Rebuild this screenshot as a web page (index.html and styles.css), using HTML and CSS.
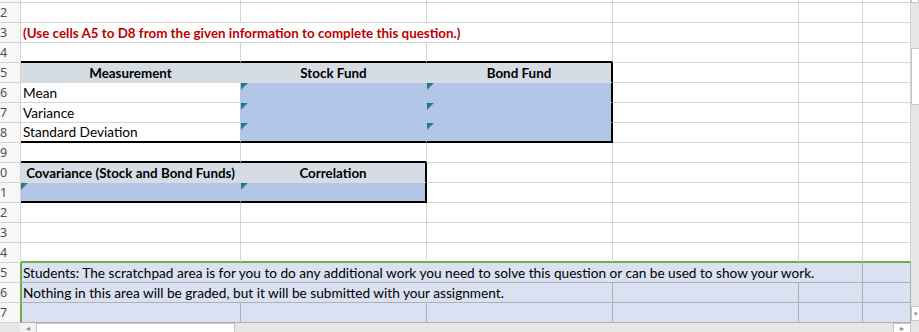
FILE: index.html
```html
<!DOCTYPE html>
<html lang="en">
<head>
<meta charset="utf-8">
<title>Worksheet</title>
<link rel="stylesheet" href="styles.css">
</head>
<body>
<div class="app">
  <div class="sheet">
    <div class="row r1">
      <div class="c rh"></div><div class="c"></div><div class="c"></div><div class="c"></div><div class="c"></div><div class="c"></div><div class="c"></div>
    </div>
    <div class="row">
      <div class="c rh">2</div><div class="c"></div><div class="c"></div><div class="c"></div><div class="c"></div><div class="c"></div><div class="c"></div>
    </div>
    <div class="row">
      <div class="c rh">3</div>
      <div class="c span3 note">(Use cells A5 to D8 from the given information to complete this question.)</div>
      <div class="c"></div><div class="c"></div><div class="c"></div>
    </div>
    <div class="row">
      <div class="c rh">4</div>
      <div class="c bb"></div><div class="c bb"></div><div class="c bb"></div>
      <div class="c"></div><div class="c"></div><div class="c"></div>
    </div>
    <div class="row">
      <div class="c rh">5</div>
      <div class="c hdr">Measurement</div>
      <div class="c hdr">Stock Fund</div>
      <div class="c hdr br">Bond Fund</div>
      <div class="c"></div><div class="c"></div><div class="c"></div>
    </div>
    <div class="row">
      <div class="c rh">6</div>
      <div class="c lbl">Mean</div>
      <div class="c inp tri"></div>
      <div class="c inp tri br"></div>
      <div class="c"></div><div class="c"></div><div class="c"></div>
    </div>
    <div class="row">
      <div class="c rh">7</div>
      <div class="c lbl">Variance</div>
      <div class="c inp tri"></div>
      <div class="c inp tri br"></div>
      <div class="c"></div><div class="c"></div><div class="c"></div>
    </div>
    <div class="row">
      <div class="c rh">8</div>
      <div class="c lbl bb">Standard Deviation</div>
      <div class="c inp tri bb"></div>
      <div class="c inp tri br bb"></div>
      <div class="c"></div><div class="c"></div><div class="c"></div>
    </div>
    <div class="row">
      <div class="c rh">9</div>
      <div class="c bb"></div><div class="c bb"></div>
      <div class="c"></div><div class="c"></div><div class="c"></div><div class="c"></div>
    </div>
    <div class="row">
      <div class="c rh">0</div>
      <div class="c hdr">Covariance (Stock and Bond Funds)</div>
      <div class="c hdr br">Correlation</div>
      <div class="c"></div><div class="c"></div><div class="c"></div><div class="c"></div>
    </div>
    <div class="row">
      <div class="c rh">1</div>
      <div class="c inp tri bb"></div>
      <div class="c inp tri br bb"></div>
      <div class="c"></div><div class="c"></div><div class="c"></div><div class="c"></div>
    </div>
    <div class="row">
      <div class="c rh">2</div><div class="c"></div><div class="c"></div><div class="c"></div><div class="c"></div><div class="c"></div><div class="c"></div>
    </div>
    <div class="row">
      <div class="c rh">3</div><div class="c"></div><div class="c"></div><div class="c"></div><div class="c"></div><div class="c"></div><div class="c"></div>
    </div>
    <div class="row">
      <div class="c rh">4</div>
      <div class="c gb"></div><div class="c gb"></div><div class="c gb"></div><div class="c gb"></div><div class="c gb"></div><div class="c gb"></div>
    </div>
    <div class="row pad">
      <div class="c rh">5</div>
      <div class="c sp span5 first">Students: The scratchpad area is for you to do any additional work you need to solve this question or can be used to show your work.</div>
      <div class="c sp"></div>
    </div>
    <div class="row pad">
      <div class="c rh">6</div>
      <div class="c sp span3 first">Nothing in this area will be graded, but it will be submitted with your assignment.</div>
      <div class="c sp"></div><div class="c sp"></div><div class="c sp"></div>
    </div>
    <div class="row pad">
      <div class="c rh">7</div>
      <div class="c sp first"></div><div class="c sp"></div><div class="c sp"></div><div class="c sp"></div><div class="c sp"></div><div class="c sp"></div>
    </div>
  </div>

  <div class="vscroll">
    <div class="vs-top"></div>
    <div class="vs-track short"></div>
    <div class="vs-thumb"></div>
    <div class="vs-track grow"></div>
    <div class="vs-down"><span>&#9662;</span></div>
    <div class="vs-end"></div>
  </div>

  <div class="hscroll">
    <div class="hs-gap"></div>
    <div class="hs-left"><span>&#9666;</span></div>
    <div class="hs-thumb"></div>
    <div class="hs-track"></div>
    <div class="hs-right"><span>&#9656;</span></div>
  </div>
  <div class="corner"></div>
</div>
</body>
</html>
```

FILE: styles.css
```css
* { box-sizing: border-box; }

html, body {
  margin: 0;
  padding: 0;
  background: #ffffff;
}

.app {
  width: 919px;
  height: 332px;
  display: grid;
  grid-template-columns: 911px 8px;
  grid-template-rows: 323px 9px;
  overflow: hidden;
  font-family: Lato, "Liberation Sans", sans-serif;
  font-size: 13.65px;
  color: #000;
}

.sheet {
  display: flex;
  flex-direction: column;
  overflow: hidden;
}

.row {
  display: grid;
  grid-template-columns: 21px 220px 186px 186px 186px 64px 48px;
  height: 20px;
  flex: none;
}

.row.r1 { height: 3px; }

.c {
  border-right: 1px solid #d4d4d4;
  border-bottom: 1px solid #d4d4d4;
  display: flex;
  align-items: flex-end;
  padding: 0 2px 1px 2px;
  white-space: nowrap;
  overflow: hidden;
  line-height: 16px;
  min-width: 0;
}

.rh {
  background: #f7f7f7;
  padding: 0;
  align-items: center;
  font-family: "Noto Sans", "Open Sans", sans-serif;
  font-size: 12.5px;
  line-height: 15px;
  color: #505050;
}

.span3 { grid-column: span 3; }
.span5 { grid-column: span 5; }

.note {
  color: #c00000;
  font-weight: 700;
  font-size: 13.4px;
  padding-left: 2px;
}

.bb { border-bottom: 2px solid #000 !important; }
.br { border-right: 2px solid #000 !important; }

.hdr {
  background: #d6dce4;
  border-color: #d6dce4;
  justify-content: center;
  font-weight: 700;
  font-size: 13.4px;
}

.lbl {
  border-right-color: #b4c6e7;
}

.inp {
  background: #b4c6e7;
  border-color: #b4c6e7;
}

.tri { position: relative; }
.tri::before {
  content: "";
  position: absolute;
  left: 0;
  top: 0;
  width: 7px;
  height: 7px;
  background: linear-gradient(135deg, #176a72 0%, #2a8a8e 48%, rgba(255,255,255,0) 52%);
}

.gb { border-bottom: 2px solid #70ad47; }

.pad .rh { border-right-color: #70ad47; }

.sp {
  background: #d9e1f2;
  border-right-color: #b0b0b0;
  border-bottom-color: #b0b0b0;
  padding-left: 1px;
}

.sp.first { border-left: 1px solid #70ad47; }

/* vertical scrollbar */
.vscroll {
  display: flex;
  flex-direction: column;
  background: #e6e6e6;
}
.vs-top {
  height: 3px;
  background: #fff;
  border: 1px solid #c6c6c6;
  border-top: none;
}
.vs-track.short { height: 45px; }
.vs-thumb {
  height: 57px;
  background: #fff;
  border: 1px solid #c6c6c6;
  border-right: none;
}
.vs-track.grow { flex: 1; }
.vs-down {
  height: 15px;
  background: #fff;
  border: 1px solid #c6c6c6;
  border-right: none;
  display: flex;
  align-items: center;
  justify-content: center;
  font-size: 7px;
  color: #8a8a8a;
  line-height: 1;
}
.vs-end { height: 2px; }

/* horizontal scrollbar */
.hscroll {
  display: flex;
  background: #e6e6e6;
}
.hs-gap { width: 20px; }
.hs-left {
  width: 16px;
  background: #f2f2f2;
  display: flex;
  align-items: center;
  justify-content: center;
  font-size: 8px;
  color: #8a8a8a;
}
.hs-thumb {
  width: 199px;
  background: #fff;
  border: 1px solid #c6c6c6;
  border-bottom: none;
}
.hs-track { flex: 1; }
.hs-right {
  width: 18px;
  background: #fff;
  border: 1px solid #c6c6c6;
  border-bottom: none;
  display: flex;
  align-items: center;
  justify-content: center;
  font-size: 8px;
  color: #8a8a8a;
}
.corner { background: #e6e6e6; }
```
